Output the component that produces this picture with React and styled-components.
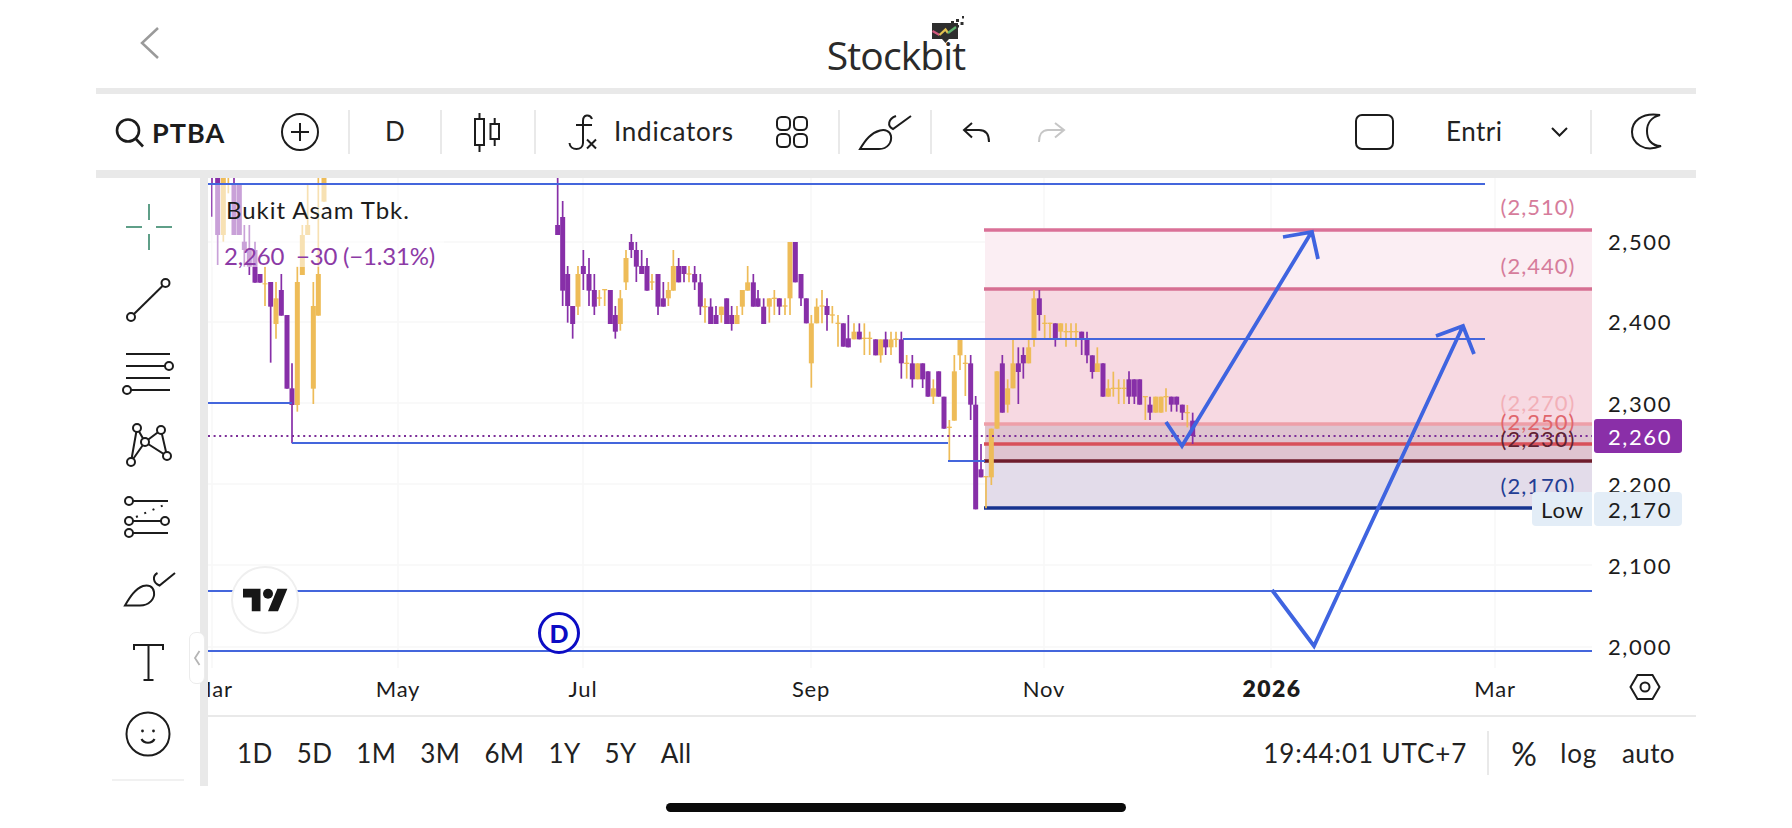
import React from "react";
import styled, { createGlobalStyle } from "styled-components";

const FONT = `Lato, "Open Sans", "Liberation Sans", sans-serif`;

const Global = createGlobalStyle`
  html, body { margin: 0; padding: 0; background: #fff; }
  body { font-family: ${FONT}; color: #1c1c1c; overflow: hidden; }
  * { box-sizing: border-box; }
`;

const Page = styled.div`
  width: 1792px;
  height: 828px;
  display: flex;
  flex-direction: column;
  padding: 0 96px;
`;

const Header = styled.header`
  height: 88px;
  display: grid;
  grid-template-columns: 1fr auto 1fr;
  align-items: start;
`;

const BackIcon = styled.svg`
  width: 24px;
  height: 36px;
  margin: 25px 0 0 42px;
  fill: none;
  stroke: #9a9a9a;
  stroke-width: 2.5;
`;

const Logo = styled.div`
  position: relative;
  margin-top: 33px;
  font-family: "Open Sans", sans-serif;
  font-size: 39px;
  line-height: 44px;
  letter-spacing: -0.9px;
  color: #2a2a2a;
`;

const LogoMark = styled.svg`
  position: absolute;
  left: 95px;
  top: -19px;
  width: 42px;
  height: 36px;
`;

const Band = styled.div`
  height: ${(p) => p.$h}px;
  background: #e9e9e9;
  flex: none;
`;

const Toolbar = styled.div`
  height: 76px;
  display: flex;
  align-items: center;
`;

const ToolSection = styled.div`
  width: ${(p) => p.$w}px;
  height: 100%;
  padding-left: ${(p) => p.$pl || 0}px;
  display: flex;
  align-items: center;
  justify-content: ${(p) => (p.$center ? "center" : "flex-start")};
  flex: none;
`;

const ToolDivider = styled.div`
  width: 2px;
  height: 44px;
  background: #e9e9e9;
  flex: none;
`;

const ToolIcon = styled.svg`
  width: ${(p) => p.$w}px;
  height: ${(p) => p.$h}px;
  margin-left: ${(p) => p.$ml || 0}px;
  fill: none;
  stroke: ${(p) => p.$stroke || "#1c1c1c"};
  stroke-width: ${(p) => p.$sw || 2};
  flex: none;
  overflow: visible;
`;

const Symbol = styled.span`
  font-size: 27px;
  font-weight: 700;
  letter-spacing: 1px;
  margin-left: 8px;
`;

const ToolText = styled.span`
  font-size: 26px;
  margin-left: ${(p) => p.$ml || 0}px;
  margin-bottom: 2px;
  letter-spacing: ${(p) => p.$ls || 0}px;
  color: #222;
`;

const Main = styled.div`
  position: relative;
  height: 608px;
  display: flex;
  flex: none;
`;

const Rail = styled.nav`
  width: 104px;
  padding-top: 13px;
  position: relative;
  display: flex;
  flex-direction: column;
  align-items: center;
  flex: none;
`;

const RailItem = styled.div`
  height: 72.4px;
  display: flex;
  align-items: center;
  justify-content: center;
  flex: none;
`;

const RailIcon = styled.svg`
  width: 64px;
  height: 64px;
  fill: none;
  stroke: ${(p) => p.$stroke || "#1c1c1c"};
  stroke-width: 2;
  overflow: visible;
`;

const RailFoot = styled.div`
  position: absolute;
  left: 16px;
  right: 16px;
  top: 601px;
  height: 2px;
  background: #f1f1f1;
`;

const RailDivider = styled.div`
  width: 8px;
  background: #e9e9e9;
  flex: none;
`;

const CollapseHandle = styled.button`
  position: absolute;
  left: 93px;
  top: 454px;
  width: 16px;
  height: 52px;
  padding: 0;
  display: flex;
  align-items: center;
  justify-content: center;
  background: #fff;
  border: 1px solid #ececec;
  border-radius: 7px;
`;

const ChartColumn = styled.div`
  flex: 1;
  display: flex;
  flex-direction: column;
`;

const ChartArea = styled.div`
  position: relative;
  height: 537px;
  overflow: hidden;
  flex: none;
`;

const ChartSvg = styled.svg`
  display: block;
  width: 1488px;
  height: 537px;
`;

const ChartLabel = styled.text`
  font-family: ${FONT};
  font-size: ${(p) => p.$size || 22}px;
  font-weight: ${(p) => p.$weight || 400};
  letter-spacing: ${(p) => (p.$ls === undefined ? 1.6 : p.$ls)}px;
  fill: ${(p) => p.$color || "#1c1c1c"};
  text-anchor: ${(p) => p.$anchor || "start"};
  dominant-baseline: central;
`;

const Legend = styled.div`
  position: absolute;
  left: 4px;
  top: 7px;
  width: 232px;
  height: 82px;
  padding: 11px 0 0 14px;
  background: rgba(255, 255, 255, 0.55);
`;

const LegendName = styled.div`
  font-size: 24px;
  line-height: 27px;
  letter-spacing: 0.95px;
  color: #1c1c1c;
`;

const LegendPrice = styled.div`
  margin-top: 19px;
  margin-left: -2px;
  font-size: 24px;
  line-height: 27px;
  letter-spacing: -0.2px;
  color: #8c3aa6;
  white-space: pre;
`;

const Badge = styled.div`
  position: absolute;
  left: ${(p) => p.$x - 208}px;
  top: ${(p) => p.$y - 178}px;
  width: ${(p) => p.$w}px;
  height: ${(p) => p.$h}px;
  padding-left: ${(p) => p.$pl}px;
  display: flex;
  align-items: center;
  font-size: 22px;
  letter-spacing: ${(p) => p.$ls}px;
  color: ${(p) => p.$color};
  background: ${(p) => p.$bg};
  border-radius: ${(p) => p.$radius};
`;

const CircleMark = styled.div`
  position: absolute;
  left: ${(p) => p.$x - 208 - p.$d / 2}px;
  top: ${(p) => p.$y - 178 - p.$d / 2}px;
  width: ${(p) => p.$d}px;
  height: ${(p) => p.$d}px;
  border-radius: 50%;
  background: #fff;
  border: ${(p) => p.$border};
  display: flex;
  align-items: center;
  justify-content: center;
`;

const DMark = styled.span`
  font-size: 25px;
  font-weight: 900;
  color: #0c0cc4;
`;

const TvLogo = styled.svg`
  width: 45px;
  height: 24px;
  fill: #161616;
`;

const TimeBar = styled.div`
  height: 71px;
  border-top: 2px solid #e9e9e9;
  display: flex;
  align-items: center;
  padding: 3px 21px 0 29px;
  flex: none;
`;

const RangeList = styled.div`
  display: flex;
  gap: 24px;
`;

const RangeItem = styled.span`
  font-size: 26px;
  letter-spacing: 0.4px;
  color: #222;
`;

const TimeRight = styled.div`
  margin-left: auto;
  display: flex;
  align-items: center;
`;

const Clock = styled.span`
  font-size: 26px;
  letter-spacing: 0.9px;
  color: #222;
`;

const TimeDivider = styled.div`
  width: 2px;
  height: 44px;
  margin: 0 22px 0 20px;
  background: #e9e9e9;
`;

const ScaleItem = styled.span`
  font-size: ${(p) => p.$size || 26}px;
  font-weight: ${(p) => p.$weight || 400};
  margin-left: ${(p) => p.$ml || 0}px;
  letter-spacing: ${(p) => p.$ls || 0.4}px;
  color: #222;
`;

const Footer = styled.div`
  flex: 1;
  display: flex;
  justify-content: center;
  padding-top: 17px;
`;

const HomeBar = styled.div`
  width: 460px;
  height: 9px;
  border-radius: 5px;
  background: #0a0a0a;
`;

/* ---------- chart data, read off the picture ---------- */
const G = "#eebc58";
const P = "#872fa8";
/* [zoom x, colour, body top, body bottom, wick top, wick bottom] */
const groupA = [
  [36,P,24,24,24,140],[53,P,24,195,24,285],[70,G,24,195,24,215],[85,G,24,24,24,70],
  [102,P,45,195,24,195],[118,P,45,195,45,195],[133,P,215,240,165,290],[148,P,240,290,165,315],
  [165,P,240,338,215,338],[180,P,312,338,312,338],[195,G,340,343,290,408],[212,P,336,410,336,578],
  [228,G,385,462,336,506],[244,P,360,437,312,437],[261,P,435,656,435,656],[276,P,655,705,580,820],
  [292,G,336,705,290,725],[307,G,195,315,165,315],[323,G,165,195,45,195],[340,G,408,656,336,702],
  [355,G,312,437,24,437],[372,G,24,95,24,95],
];
const groupB = [
  [53,P,15,45,-126,45],[68,P,-9,212,-57,258],[83,P,162,258,138,308],[98,P,258,312,258,356],
  [114,G,162,260,138,285],[130,P,138,162,90,210],[147,P,162,212,114,258],[163,P,210,260,162,285],
  [178,G,232,236,210,258],[194,G,207,211,207,258],[211,P,210,312,210,312],[226,P,285,335,258,356],
  [241,G,235,312,210,332],[258,G,114,187,90,210],[274,P,66,90,42,114],[289,P,90,140,66,186],
  [305,P,138,162,90,162],[321,P,138,212,114,212],[336,G,184,188,162,210],[354,P,162,260,162,285],
  [370,P,235,260,186,260],[385,G,210,235,186,258],[400,G,138,212,90,212],[416,P,138,187,114,187],
  [432,P,138,162,138,187],[447,G,160,164,138,187],[464,P,162,187,138,210],[481,P,187,260,162,285],
  [495,G,258,262,235,308],[512,P,260,312,235,312],[528,P,285,312,258,312],[544,G,260,285,260,308],
  [560,P,235,312,235,312],[575,P,285,312,258,332],[591,G,285,312,258,312],[607,G,210,260,210,285],
  [623,G,187,212,138,212],[640,P,187,260,162,260],[654,P,235,260,210,260],[671,P,260,312,235,312],
  [688,G,235,260,235,308],[703,G,233,237,210,285],[718,P,235,260,235,285],
];
const groupC = [
  [15,G,256,260,235,285],[30,G,66,235,66,285],[46,P,66,187,66,187],[63,P,162,235,162,258],
  [79,P,235,310,235,310],[94,G,310,430,285,503],[110,G,260,310,235,310],[126,G,256,260,210,310],
  [141,P,258,285,235,332],[157,G,283,287,258,310],[174,G,308,312,285,380],[190,P,310,380,310,380],
  [205,P,355,382,285,382],[222,G,335,358,310,358],[238,P,335,358,310,358],[253,G,353,357,310,405],
  [269,G,353,357,335,405],[287,P,358,406,358,406],[302,G,358,406,358,428],[317,P,358,382,335,405],
  [333,G,358,382,335,405],[348,G,356,360,335,382],[364,P,358,430,335,476],[380,G,428,432,405,476],
  [397,P,430,478,405,503],[413,G,430,478,430,478],[428,P,430,478,430,504],[444,P,454,530,454,530],
  [460,G,505,530,478,552],[476,P,454,530,454,530],[492,P,530,626,530,626],[508,G,620,624,600,720],
  [523,G,454,602,405,602],[540,G,358,406,358,450],[556,G,428,432,405,528],[572,P,430,554,405,600],
  [587,P,554,868,528,868],[603,P,748,772,672,772],[618,G,768,772,770,865],[634,G,626,772,626,795],
  [651,G,454,626,454,626],[667,P,430,578,405,578],[683,G,505,554,478,578],[699,G,430,505,358,505],
  [715,P,430,456,382,552],[730,P,405,430,382,476],[746,G,382,430,358,430],[762,G,235,358,210,380],
  [778,P,235,285,210,332],[794,G,308,312,285,358],[810,G,308,312,308,358],[826,P,310,358,310,380],
  [842,G,310,335,310,358],[858,G,333,337,310,380],[873,G,333,337,310,358],[888,G,333,337,310,380],
  [905,P,335,358,335,405],[921,P,358,406,335,430],[937,P,406,456,406,476],[952,G,430,456,382,456],
  [969,P,430,530,430,530],[985,G,505,530,478,530],[1000,G,503,507,455,530],[1016,G,503,507,478,552],
  [1032,G,503,507,478,552],[1047,P,478,530,454,552],[1063,P,478,530,478,552],[1079,P,478,554,478,554],
  [1096,G,528,532,528,600],[1110,P,554,578,530,600],[1127,G,530,578,530,578],[1143,G,530,578,530,578],
  [1158,G,528,532,505,575],[1174,P,530,554,530,575],[1190,P,530,554,530,575],[1207,P,554,578,554,600],
  [1222,G,576,580,555,622],[1238,P,602,648,578,672],
];

const toCandles = (rows, ox, oy) =>
  rows.map(([x, c, t, b, wt, wb]) => ({
    x: ox + x / 3, c, t: oy + t / 3, b: oy + b / 3, wt: oy + wt / 3, wb: oy + wb / 3,
  }));

const candles = [
  ...toCandles(groupA, 200, 170),
  ...toCandles(groupB, 540, 220),
  ...toCandles(groupC, 780, 220),
];

const Candles = () => (
  <g>
    {candles.map((k, i) => (
      <g key={i}>
        <line x1={k.x} x2={k.x} y1={k.wt} y2={k.wb} stroke={k.c} strokeWidth="1.7" />
        {k.b > k.t && <rect x={k.x - 2.5} y={k.t} width="5" height={k.b - k.t} fill={k.c} />}
      </g>
    ))}
  </g>
);

const priceTicks = [["2,500", 241], ["2,400", 321], ["2,300", 403], ["2,200", 484], ["2,100", 565], ["2,000", 646]];
const timeTicks = [["Mar", 212], ["May", 398], ["Jul", 583], ["Sep", 811], ["Nov", 1044], ["2026", 1272, 800], ["Mar", 1495]];
const zones = [
  [230, 59, "#fbeef3"], [289, 135, "#f7d9e2"], [424, 37, "#dfc4d0"], [461, 47, "#e3dcea"],
];
const levels = [
  [230, "#da7097"], [289, "#d66f92"], [424, "#ee9fa8"], [444, "#d8505a"], [461, "#6f1d2c"], [508, "#17338f"],
];
const tags = [
  ["(2,510)", 206, "#d67c9b"], ["(2,440)", 265, "#d67c9b"], ["(2,270)", 402, "#f2b0b8"],
  ["(2,250)", 421, "#e0666c"], ["(2,230)", 438, "#5f2230"], ["(2,170)", 485, "#233d94"],
];
const blueLines = [
  [208, 1485, 184], [903, 1485, 339], [208, 292, 403], [292, 948, 443], [948, 985, 461], [208, 1592, 591], [208, 1592, 651],
];

const Chart = () => (
  <ChartArea>
    <ChartSvg viewBox="208 178 1488 537">
      {[242, 322, 403, 484, 565, 647].map((y) => (
        <line key={y} x1="208" x2="1592" y1={y} y2={y} stroke="#f7f7f7" strokeWidth="1.5" />
      ))}
      {[212, 398, 583, 811, 1044, 1271, 1495].map((x) => (
        <line key={x} x1={x} x2={x} y1="178" y2="668" stroke="#f7f7f7" strokeWidth="1.5" />
      ))}
      {zones.map(([y, h, fill]) => (
        <rect key={y} x="985" y={y} width="607" height={h} fill={fill} />
      ))}
      {levels.map(([y, c]) => (
        <line key={y} x1="984" x2="1592" y1={y} y2={y} stroke={c} strokeWidth="3.6" />
      ))}
      <Candles />
      {blueLines.map(([a, b, y]) => (
        <line key={y + "-" + a} x1={a} x2={b} y1={y} y2={y} stroke="#4466dc" strokeWidth="2.2" />
      ))}
      <line x1="208" x2="1592" y1="436" y2="436" stroke="#7c2e98" strokeWidth="2" strokeDasharray="2 3.6" />
      <g fill="none" stroke="#3f64e0" strokeWidth="3.8" strokeLinejoin="miter">
        <path d="M1166 422 L1182 446 L1311 233 M1283 237 L1312 232 L1318 259" />
        <path d="M1272 590 L1314 646 L1463 326 M1436 336 L1463 326 L1474 354" />
      </g>
      {tags.map(([t, y, c]) => (
        <ChartLabel key={t} x="1538" y={y} $anchor="middle" $color={c} $ls={1}>{t}</ChartLabel>
      ))}
      {priceTicks.map(([t, y]) => (
        <ChartLabel key={t} x="1608" y={y}>{t}</ChartLabel>
      ))}
      {timeTicks.map(([t, x, w]) => (
        <ChartLabel key={t + x} x={x} y="688" $anchor="middle" $weight={w} $size={w ? 23 : 22} $ls={w ? 1.4 : 0.8}>{t}</ChartLabel>
      ))}
      <path
        d="M1630.5 687 L1637.5 675 H1652.5 L1659.5 687 L1652.5 699 H1637.5 Z"
        fill="none" stroke="#1c1c1c" strokeWidth="2"
      />
      <circle cx="1645" cy="687" r="4.5" fill="none" stroke="#1c1c1c" strokeWidth="2" />
    </ChartSvg>
    <Legend>
      <LegendName>Bukit Asam Tbk.</LegendName>
      <LegendPrice>{"2,260  −30 (−1.31%)"}</LegendPrice>
    </Legend>
    <Badge $x={1594} $y={419} $w={88} $h={34} $pl={14} $ls={1.6} $color="#fff" $bg="#8a2fa8" $radius="3px">2,260</Badge>
    <Badge $x={1532} $y={492} $w={60} $h={34} $pl={9} $ls={1} $color="#1c1c1c" $bg="#e3edf7" $radius="4px 0 0 4px">Low</Badge>
    <Badge $x={1594} $y={492} $w={88} $h={34} $pl={14} $ls={1.6} $color="#1c1c1c" $bg="#e3edf7" $radius="4px">2,170</Badge>
    <CircleMark $x={265} $y={600} $d={68} $border="2px solid #efefef">
      <TvLogo viewBox="0 4 36 18">
        <path d="M14 22H7V11H0V4h14v18zM28 22h-8l7.5-18h8L28 22z" />
        <circle cx="20" cy="8" r="4" />
      </TvLogo>
    </CircleMark>
    <CircleMark $x={559} $y={633} $d={42} $border="3px solid #0c0cc4">
      <DMark>D</DMark>
    </CircleMark>
  </ChartArea>
);

const railIcons = [
  { box: "116 195 64 64", stroke: "#5f9f88", body: <path d="M126 227H142M156 227H172M149 204V220M149 234V250" /> },
  {
    box: "116 266 64 64",
    body: (
      <>
        <circle cx="131" cy="315" r="4" />
        <circle cx="165.5" cy="281" r="4" />
        <path d="M134 312L162.5 284" />
      </>
    ),
  },
  {
    box: "116 337 64 64",
    body: (
      <>
        <path d="M126 351H170M126 363H165M126 375H170M131 387H170" />
        <circle cx="169" cy="363" r="4" />
        <circle cx="127" cy="387" r="4" />
      </>
    ),
  },
  {
    box: "116 409 64 64",
    body: (
      <>
        <path d="M131 459L137 425L145 439L131 459M145 439L161 427L167 453L145 439" />
        {[[137, 425], [161, 427], [145, 439], [131, 459], [167, 453]].map(([x, y]) => (
          <circle key={x} cx={x} cy={y} r="4" fill="#fff" />
        ))}
      </>
    ),
  },
  {
    box: "116 483 64 64",
    body: (
      <>
        <path d="M133 499H168M133 519H161M133 531H168" />
        <path d="M136 515L164 503" strokeDasharray="2 7" />
        <circle cx="129" cy="499" r="4" />
        <circle cx="129" cy="519" r="4" />
        <circle cx="165" cy="519" r="4" />
        <circle cx="129" cy="531" r="4" />
      </>
    ),
  },
  {
    box: "116 555 64 64",
    body: (
      <path d="M125 603.5H140C149 603.5 155 597 154 590C153 584 148 582.5 143 584C135 587 130 595 125 603.5ZM157.5 571C152 574 153 581 159.5 583.5L175 571" />
    ),
  },
  {
    box: "116 626 64 64",
    body: <path d="M134 646V641H163V646M148.5 641V676M143.5 676H153.5" />,
  },
  {
    box: "116 698 64 64",
    body: (
      <>
        <circle cx="148" cy="730" r="21.5" />
        <path d="M141.5 735C144 740 152 740 154.5 735" strokeWidth="2.2" />
        <circle cx="142.5" cy="727" r="1.4" fill="#1c1c1c" stroke="none" />
        <circle cx="153.5" cy="727" r="1.4" fill="#1c1c1c" stroke="none" />
      </>
    ),
  },
];

export default function App() {
  return (
    <>
      <Global />
      <Page>
        <Header>
          <BackIcon viewBox="0 0 24 36">
            <path d="M20 3L4 18L20 33" />
          </BackIcon>
          <Logo>
            Stockbit
            <LogoMark viewBox="923 14 42 36">
              <path d="M933 23H959V39H950L946.5 43L943 39H933Z" fill="#2e2e2e" />
              <path d="M933.5 31L940.5 35" stroke="#d0597f" strokeWidth="2.2" fill="none" />
              <path d="M940.5 35L946.5 29.5L949 33" stroke="#e2c24f" strokeWidth="2.2" fill="none" />
              <path d="M949 33L957 27" stroke="#5fb36f" strokeWidth="2.2" fill="none" />
              <path d="M952 21h3v3h-3zM957 19h3v3h-3zM961.5 22h3v3h-3zM963 16h2.5v2.5h-2.5zM957.5 25h2.5v2.5h-2.5z" fill="#2e2e2e" />
            </LogoMark>
          </Logo>
          <div />
        </Header>
        <Band $h={6} />
        <Toolbar>
          <ToolSection $w={252} $pl={20}>
            <ToolIcon viewBox="116 118 28 29" $w={28} $h={29} $sw={2.6}>
              <circle cx="128" cy="130.5" r="11" />
              <path d="M135.5 138.5L143 146.5" />
            </ToolIcon>
            <Symbol>PTBA</Symbol>
            <ToolIcon viewBox="282 114 38 38" $w={38} $h={38} $ml={56}>
              <circle cx="301" cy="133" r="18" />
              <path d="M292 133H310M301 124V142" />
            </ToolIcon>
          </ToolSection>
          <ToolDivider />
          <ToolSection $w={90} $center>
            <ToolText>D</ToolText>
          </ToolSection>
          <ToolDivider />
          <ToolSection $w={92} $center>
            <ToolIcon viewBox="475 112 30 41" $w={30} $h={41}>
              <rect x="477" y="119" width="9" height="26" />
              <rect x="492.5" y="124" width="8.5" height="15" />
              <path d="M481.5 113V119M481.5 145V152M496.7 118V124M496.7 139V146" />
            </ToolIcon>
          </ToolSection>
          <ToolDivider />
          <ToolSection $w={302} $pl={32}>
            <ToolIcon viewBox="567 113 29 37" $w={29} $h={37}>
              <path d="M591 118C589 113 582 113 582 120V142C582 150 569 150 568.5 142M575 124H591" />
              <path d="M586 138.5L595 147.5M595 138.5L586 147.5" />
            </ToolIcon>
            <ToolText $ml={17} $ls={0.75}>Indicators</ToolText>
            <ToolIcon viewBox="776 116 32 32" $w={32} $h={32} $ml={42}>
              <rect x="777" y="117" width="13" height="13" rx="4.5" />
              <rect x="794" y="117" width="13" height="13" rx="4.5" />
              <rect x="777" y="134" width="13" height="13" rx="4.5" />
              <rect x="794" y="134" width="13" height="13" rx="4.5" />
            </ToolIcon>
          </ToolSection>
          <ToolDivider />
          <ToolSection $w={90} $center>
            <ToolIcon viewBox="859 115 53 36" $w={53} $h={36}>
              <path d="M860 150H879C888 150 892 143 891 137C890 132 885 130 880 131.5C871 134 866 140 860 150ZM896 117C888 120 887 127 893 130L911 117" />
            </ToolIcon>
          </ToolSection>
          <ToolDivider />
          <ToolSection $w={658} $pl={30}>
            <ToolIcon viewBox="962 122 28 21" $w={28} $h={21}>
              <path d="M972 123L964 130L972 137.5M964 130H979C986 130 989 135 989 142" />
            </ToolIcon>
            <ToolIcon viewBox="1040 122 28 21" $w={28} $h={21} $ml={48} $stroke="#c6c6c6">
              <path d="M1057 123L1066 130L1057 137.5M1066 130H1050C1044 130 1041 135 1041 142" />
            </ToolIcon>
            <ToolIcon viewBox="1356 115 39 36" $w={39} $h={36} $ml={289}>
              <rect x="1357" y="116" width="37" height="34" rx="6" />
            </ToolIcon>
            <ToolText $ml={52} $ls={0.5}>Entri</ToolText>
            <ToolIcon viewBox="1553 127 18 10" $w={18} $h={10} $ml={48}>
              <path d="M1554 128L1561.5 135.5L1569 128" />
            </ToolIcon>
          </ToolSection>
          <ToolDivider />
          <ToolSection $w={104} $pl={39}>
            <ToolIcon viewBox="1631 113 32 38" $w={32} $h={38}>
              <path d="M1660 115C1641 112 1632 122 1632 132C1632 143 1644 153 1661 146C1651 146 1647 139 1647 131C1647 123 1652 117 1660 115Z" />
            </ToolIcon>
          </ToolSection>
        </Toolbar>
        <Band $h={8} />
        <Main>
          <Rail>
            {railIcons.map((ic) => (
              <RailItem key={ic.box}>
                <RailIcon viewBox={ic.box} $stroke={ic.stroke}>
                  {ic.body}
                </RailIcon>
              </RailItem>
            ))}
            <RailFoot />
          </Rail>
          <RailDivider />
          <ChartColumn>
            <Chart />
            <TimeBar>
              <RangeList>
                {["1D", "5D", "1M", "3M", "6M", "1Y", "5Y", "All"].map((r) => (
                  <RangeItem key={r}>{r}</RangeItem>
                ))}
              </RangeList>
              <TimeRight>
                <Clock>19:44:01 UTC+7</Clock>
                <TimeDivider />
                <ScaleItem $size={32}>%</ScaleItem>
                <ScaleItem $ml={23} $ls={0.8}>log</ScaleItem>
                <ScaleItem $ml={25}>auto</ScaleItem>
              </TimeRight>
            </TimeBar>
          </ChartColumn>
          <CollapseHandle aria-label="Collapse">
            <svg width="8" height="18" viewBox="0 0 8 18" fill="none" stroke="#b5b5b5" strokeWidth="1.8">
              <path d="M6.5 2L2 9L6.5 16" />
            </svg>
          </CollapseHandle>
        </Main>
        <Footer>
          <HomeBar />
        </Footer>
      </Page>
    </>
  );
}
